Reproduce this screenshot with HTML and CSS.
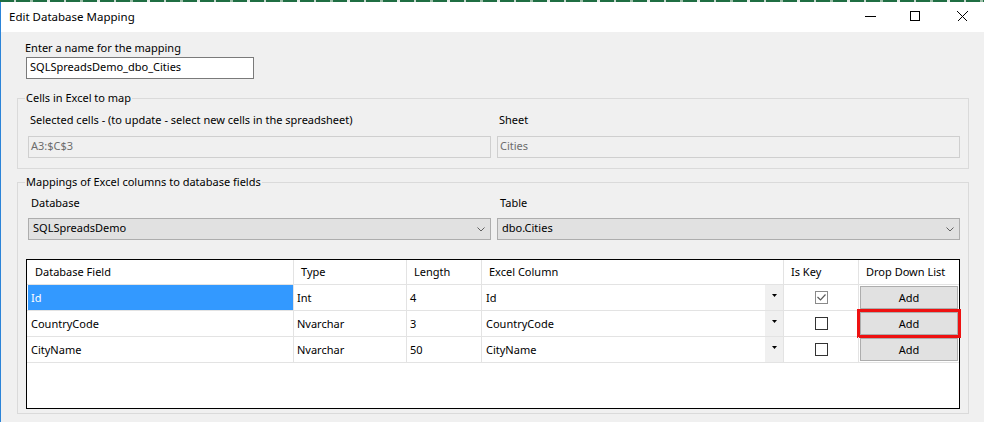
FILE: index.html
```html
<!DOCTYPE html>
<html>
<head>
<meta charset="utf-8">
<title>Edit Database Mapping</title>
<link rel="stylesheet" href="styles.css">
</head>
<body>
<div class="strip"></div>
<div class="window">
  <div class="titlebar">
    <span class="title">Edit Database Mapping</span>
    <div class="controls">
      <svg class="ic-min" width="11" height="11" viewBox="0 0 11 11"><rect x="0" y="5" width="11" height="1" fill="#000"/></svg>
      <svg class="ic-max" width="10" height="10" viewBox="0 0 10 10"><rect x="0.5" y="0.5" width="9" height="9" fill="none" stroke="#000" stroke-width="1"/></svg>
      <svg class="ic-close" width="11" height="11" viewBox="0 0 11 11" shape-rendering="crispEdges"><path d="M0.5 0.5 L10.5 10.5 M10.5 0.5 L0.5 10.5" stroke="#000" stroke-width="1" fill="none"/></svg>
    </div>
  </div>
  <div class="content">
    <div class="name-label">Enter a name for the mapping</div>
    <div class="name-input">SQLSpreadsDemo_dbo_Cities</div>

    <div class="group group1">
      <div class="caption">Cells in Excel to map</div>
      <div class="cols">
        <div class="col">
          <div class="lbl">Selected cells - (to update - select new cells in the spreadsheet)</div>
          <div class="tb">A3:$C$3</div>
        </div>
        <div class="col">
          <div class="lbl">Sheet</div>
          <div class="tb">Cities</div>
        </div>
      </div>
    </div>

    <div class="group group2">
      <div class="caption">Mappings of Excel columns to database fields</div>
      <div class="cols">
        <div class="col">
          <div class="lbl lbl2">Database</div>
          <div class="combo"><span>SQLSpreadsDemo</span><svg width="8" height="5" viewBox="0 0 8 5"><path d="M0.5 0.5 L4 4 L7.5 0.5" stroke="#606060" stroke-width="1" fill="none"/></svg></div>
        </div>
        <div class="col">
          <div class="lbl lbl2">Table</div>
          <div class="combo"><span>dbo.Cities</span><svg width="8" height="5" viewBox="0 0 8 5"><path d="M0.5 0.5 L4 4 L7.5 0.5" stroke="#606060" stroke-width="1" fill="none"/></svg></div>
        </div>
      </div>

      <div class="grid">
        <div class="hd first">Database Field</div>
        <div class="hd">Type</div>
        <div class="hd">Length</div>
        <div class="hd">Excel Column</div>
        <div class="hd">Is Key</div>
        <div class="hd last">Drop Down List</div>

        <div class="cell first selected">Id</div>
        <div class="cell">Int</div>
        <div class="cell">4</div>
        <div class="cell excel"><span>Id</span><span class="dd"><svg width="5" height="3" viewBox="0 0 5 3"><path d="M0 0 H5 L2.5 3 Z" fill="#000"/></svg></span></div>
        <div class="cell key"><span class="chk checked"><svg width="11" height="11" viewBox="0 0 11 11"><path d="M1.5 5 L4.5 8 L9.5 2.5" stroke="#5a5a5a" stroke-width="1.2" fill="none"/></svg></span></div>
        <div class="cell last btncell"><span class="btn">Add</span></div>

        <div class="cell first">CountryCode</div>
        <div class="cell">Nvarchar</div>
        <div class="cell">3</div>
        <div class="cell excel"><span>CountryCode</span><span class="dd"><svg width="5" height="3" viewBox="0 0 5 3"><path d="M0 0 H5 L2.5 3 Z" fill="#000"/></svg></span></div>
        <div class="cell key"><span class="chk"></span></div>
        <div class="cell last btncell"><span class="btn marked">Add</span></div>

        <div class="cell first">CityName</div>
        <div class="cell">Nvarchar</div>
        <div class="cell">50</div>
        <div class="cell excel"><span>CityName</span><span class="dd"><svg width="5" height="3" viewBox="0 0 5 3"><path d="M0 0 H5 L2.5 3 Z" fill="#000"/></svg></span></div>
        <div class="cell key"><span class="chk"></span></div>
        <div class="cell last btncell"><span class="btn">Add</span></div>
      </div>
    </div>
  </div>
</div>
</body>
</html>
```

FILE: styles.css
```css
* { box-sizing: border-box; }
html, body { margin: 0; padding: 0; }
body {
  width: 984px;
  height: 422px;
  overflow: hidden;
  font-family: "Noto Sans", "Liberation Sans", sans-serif;
  font-size: 11px;
  color: #000;
  background: #f0f0f0;
}
.strip {
  height: 2px;
  background: repeating-linear-gradient(90deg, #1f6e43 0 14px, #c9d6cf 14px 16px, #1f6e43 16px 30px, #9dbfa9 30px 33px, #1f6e43 33px 47px, #e5ece8 47px 50px);
}
.window {
  border-left: 1px solid #2b84d8;
  height: 420px;
  display: flex;
  flex-direction: column;
}
.titlebar {
  height: 30px;
  flex: none;
  background: #fff;
  display: flex;
  align-items: center;
}
.title {
  flex: 1;
  padding-left: 8px;
  line-height: 16px;
  font-size: 11.5px;
}
.controls {
  display: flex;
  align-self: flex-start;
  padding-top: 9px;
  padding-right: 16px;
}
.controls svg { display: block; }
.ic-max { margin-left: 34px; }
.ic-close { margin-left: 37px; }

.content {
  flex: 1;
  background: #f0f0f0;
  padding-top: 8px;
}
.name-label {
  margin-left: 24px;
  line-height: 16px;
}
.name-input {
  margin: 1px 0 0 25px;
  width: 228px;
  height: 22px;
  border: 1px solid #7a7a7a;
  background: #fff;
  padding-left: 3px;
  line-height: 18px;
}

.group {
  width: 952px;
  margin-left: 16px;
  border: 1px solid #dadada;
  padding: 0 8px 10px 10px;
}
.group1 { margin-top: 19px; }
.group2 { margin-top: 13px; padding-bottom: 4px; }
.caption {
  width: max-content;
  margin: -9px 0 0 -3px;
  padding: 0 1px;
  background: #f0f0f0;
  line-height: 16px;
}
.cols {
  display: grid;
  grid-template-columns: 463px 463px;
  column-gap: 6px;
}
.lbl {
  padding-left: 2px;
  line-height: 16px;
  margin-top: 6px;
}
.lbl2 { margin-top: 5px; padding-left: 3px; }
.tb {
  height: 22px;
  margin-top: 8px;
  border: 1px solid #cfcfcf;
  padding-left: 2px;
  line-height: 18px;
  color: #6d6d6d;
}
.combo {
  height: 22px;
  margin-top: 7px;
  border: 1px solid #adadad;
  background: #e1e1e1;
  padding: 0 5px 0 4px;
  line-height: 18px;
  display: flex;
  justify-content: space-between;
}
.combo svg { display: block; margin-top: 8px; }

.grid {
  margin: 19px 0 0 -2px;
  width: 934px;
  height: 150px;
  border: 1px solid #000;
  background: #fff;
  display: grid;
  grid-template-columns: 267px 113px 75px 302px 75px 100px;
  grid-template-rows: 25px 26px 26px 26px;
  align-content: start;
}
.hd, .cell {
  border-right: 1px solid #e3e3e3;
  border-bottom: 1px solid #e3e3e3;
  white-space: nowrap;
}
.hd {
  line-height: 24px;
  padding-left: 7px;
}
.hd.first { padding-left: 8px; }
.last { border-right: none; }
.cell {
  line-height: 25px;
  padding-left: 3px;
}
.cell.first { padding-left: 4px; }
.cell.selected {
  background: #3399ff;
  color: #fff;
  box-shadow: inset 1px 0 0 #fff;
}
.cell.excel {
  display: flex;
  justify-content: space-between;
  padding-left: 4px;
}
.dd {
  width: 18px;
  height: 25px;
  background: #f0f0f0;
  display: flex;
  justify-content: center;
  padding-top: 9px;
}
.dd svg { display: block; }
.cell.key {
  display: flex;
  align-items: center;
  justify-content: center;
  padding-left: 0;
}
.chk {
  width: 13px;
  height: 13px;
  border: 1px solid #333;
  background: #fff;
  display: block;
}
.chk.checked { border-color: #8a8a8a; }
.chk svg { display: block; }
.cell.btncell {
  padding: 1px 0 0 1px;
}
.btn {
  display: block;
  width: 98px;
  height: 23px;
  border: 1px solid #adadad;
  background: #e1e1e1;
  text-align: center;
  line-height: 21px;
}
.btn.marked {
  outline: 3px solid #ee1111;
}
```
